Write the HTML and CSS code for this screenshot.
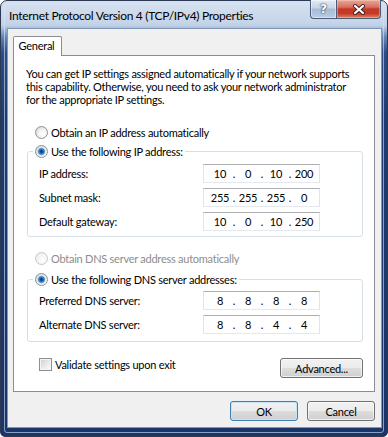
FILE: index.html
```html
<!DOCTYPE html>
<html lang="en">
<head>
    <meta charset="UTF-8">
    <title>Internet Protocol Version 4 (TCP/IPv4) Properties</title>
    <link rel="stylesheet" href="styles.css">
</head>
<body>

    <div class="window">
        <div class="frame">
            <!-- Title bar -->
            <div class="titlebar">
                <span class="title">Internet Protocol Version 4 (TCP/IPv4) Properties</span>
                <div class="caption-btns">
                    <span class="cap cap-help">?</span>
                    <span class="cap cap-close">
                        <svg width="14" height="11" viewBox="0 0 14 11">
                            <path d="M3 2 L11 9 M11 2 L3 9" stroke="#3a2320" stroke-width="4" stroke-linecap="round"/>
                            <path d="M3 2 L11 9 M11 2 L3 9" stroke="#ffffff" stroke-width="2.2" stroke-linecap="round"/>
                        </svg>
                    </span>
                </div>
            </div>

            <div class="client">
                <div class="tabs">
                    <span class="tab">General</span>
                </div>

                <div class="panel">
                    <p class="intro">
                        You can get IP settings assigned automatically if your network supports<br>
                        this capability. Otherwise, you need to ask your network administrator<br>
                        for the appropriate IP settings.
                    </p>

                    <div class="option first-option">
                        <span class="radio"></span>
                        <span>Obtain an IP address automatically</span>
                    </div>

                    <fieldset class="group ip-group">
                        <legend class="option">
                            <span class="radio checked"></span>
                            <span>Use the following IP address:</span>
                        </legend>
                        <div class="field-row">
                            <span class="field-label">IP address:</span>
                            <div class="ipbox">
                                <span class="oct">10</span><span class="dot">.</span><span class="oct">0</span><span class="dot">.</span><span class="oct">10</span><span class="dot">.</span><span class="oct">200</span>
                            </div>
                        </div>
                        <div class="field-row">
                            <span class="field-label">Subnet mask:</span>
                            <div class="ipbox">
                                <span class="oct">255</span><span class="dot">.</span><span class="oct">255</span><span class="dot">.</span><span class="oct">255</span><span class="dot">.</span><span class="oct">0</span>
                            </div>
                        </div>
                        <div class="field-row">
                            <span class="field-label">Default gateway:</span>
                            <div class="ipbox">
                                <span class="oct">10</span><span class="dot">.</span><span class="oct">0</span><span class="dot">.</span><span class="oct">10</span><span class="dot">.</span><span class="oct">250</span>
                            </div>
                        </div>
                    </fieldset>

                    <div class="option disabled dns-auto">
                        <span class="radio"></span>
                        <span>Obtain DNS server address automatically</span>
                    </div>

                    <fieldset class="group dns-group">
                        <legend class="option">
                            <span class="radio checked"></span>
                            <span>Use the following DNS server addresses:</span>
                        </legend>
                        <div class="field-row">
                            <span class="field-label">Preferred DNS server:</span>
                            <div class="ipbox">
                                <span class="oct">8</span><span class="dot">.</span><span class="oct">8</span><span class="dot">.</span><span class="oct">8</span><span class="dot">.</span><span class="oct">8</span>
                            </div>
                        </div>
                        <div class="field-row">
                            <span class="field-label">Alternate DNS server:</span>
                            <div class="ipbox">
                                <span class="oct">8</span><span class="dot">.</span><span class="oct">8</span><span class="dot">.</span><span class="oct">4</span><span class="dot">.</span><span class="oct">4</span>
                            </div>
                        </div>
                    </fieldset>

                    <div class="bottom-row">
                        <div class="option">
                            <span class="checkbox"></span>
                            <span>Validate settings upon exit</span>
                        </div>
                        <button class="btn btn-advanced">Advanced...</button>
                    </div>
                </div>

                <!-- Dialog buttons -->
                <div class="dialog-btns">
                    <button class="btn btn-default">OK</button>
                    <button class="btn">Cancel</button>
                </div>
            </div>
        </div>
    </div>

</body>
</html>
```

FILE: styles.css
```css
* {
    margin: 0;
    padding: 0;
    box-sizing: border-box;
}

body {
    font-family: 'Lato', 'Noto Sans', sans-serif;
    font-size: 11px;
    letter-spacing: -0.25px;
    color: #000;
    background: #fff;
}

/* Window chrome */
.window {
    width: 388px;
    height: 437px;
    border: 1px solid #2b3a52;
    border-radius: 7px 7px 5px 5px;
    padding: 3px;
    background: linear-gradient(to bottom, #d7e2f0 0px, #c3d3e7 24px, #6585b5 36px, #2a4b84 52px, #1d3b70 120px, #1a3567 100%);
}

.frame {
    height: 100%;
    border: 1px solid rgba(214, 228, 248, 0.6);
    border-radius: 5px 5px 3px 3px;
    padding: 0 2px 5px 3px;
    display: flex;
    flex-direction: column;
}

.titlebar {
    height: 24px;
    display: flex;
    align-items: flex-start;
}

.title {
    margin: 3px 0 0 1px;
    line-height: 15px;
    font-size: 12px;
    letter-spacing: -0.3px;
}

.caption-btns {
    margin-left: auto;
    margin-top: -5px;
    display: flex;
}

.cap {
    height: 19px;
    display: flex;
    align-items: center;
    justify-content: center;
    border: 1px solid #4a5b77;
    border-top: none;
}

.cap-help {
    width: 26px;
    border-radius: 0 0 0 4px;
    border-right: none;
    background: linear-gradient(to bottom, #e3ebf4 0%, #c6d4e5 45%, #a6bbd5 50%, #b9cde4 100%);
    box-shadow: inset 0 0 0 1px rgba(255, 255, 255, 0.45);
    color: #fff;
    font-family: 'DejaVu Sans', sans-serif;
    font-weight: bold;
    font-size: 12px;
    letter-spacing: 0;
    text-shadow: 0 0 2px #1f2c3f, 0 0 1px #1f2c3f;
}

.cap-close {
    width: 45px;
    border-radius: 0 0 4px 0;
    background: linear-gradient(to bottom, #e9a899 0%, #d7705d 40%, #c5362a 50%, #c53b26 75%, #e0835e 100%);
    box-shadow: inset 0 0 0 1px rgba(255, 220, 210, 0.4);
}

/* Client area */
.client {
    flex: 1;
    background: #f0f0f0;
    box-shadow: 0 0 0 1px #8197b8;
    padding: 7px 6px 6px 5px;
    display: flex;
    flex-direction: column;
}

.tabs {
    display: flex;
    margin-bottom: -1px;
    position: relative;
    z-index: 1;
}

.tab {
    height: 20px;
    width: 49px;
    border: 1px solid #898c95;
    border-bottom: none;
    border-radius: 2px 2px 0 0;
    background: #fff;
    text-align: center;
    line-height: 18px;
    padding-right: 2px;
}

.panel {
    height: 337px;
    border: 1px solid #898c95;
    background: #fff;
    padding: 0 11px 0 0;
}

.intro {
    margin: 11px 0 0 12px;
    line-height: 13px;
    white-space: nowrap;
}

/* Radios / checkboxes */
.option {
    display: flex;
    align-items: center;
    gap: 3px;
    height: 14px;
}

.first-option {
    margin: 19px 0 0 21px;
}

.dns-auto {
    margin: 14px 0 0 21px;
}

.option.disabled {
    color: #8d8d8d;
}

.radio {
    width: 13px;
    height: 13px;
    border-radius: 50%;
    border: 1px solid #8e8f8f;
    background: radial-gradient(circle at 65% 65%, #ffffff 0, #f4f4f4 40%, #d0d0d0 100%);
    flex: none;
}

.radio.checked {
    background:
        radial-gradient(circle at 50% 50%, #0d2f5c 0, #1f5a9c 1.5px, #4d95d6 3px, #9fd0f2 3.8px, transparent 4.3px),
        radial-gradient(circle at 65% 65%, #ffffff 0, #f4f4f4 40%, #d0d0d0 100%);
}

.disabled .radio {
    border-color: #c7c7c7;
    background: radial-gradient(circle at 65% 65%, #ffffff 0, #f7f7f7 40%, #e6e6e6 100%);
}

.checkbox {
    width: 13px;
    height: 13px;
    border: 1px solid #8e8f8f;
    background: linear-gradient(135deg, #cfcfcf 0%, #ececec 60%, #fbfbfb 100%);
    box-shadow: inset 0 0 0 1px #f4f4f4;
    flex: none;
}

/* Group boxes */
.group {
    border: 1px solid #d5dfe5;
    border-radius: 3px;
    margin: 0 0 0 13px;
    padding: 5px 0 5px 11px;
    min-width: 0;
}

.ip-group {
    margin-top: 4px;
}

.dns-group {
    margin-top: 6px;
    padding-top: 4px;
    padding-bottom: 7px;
}

.group legend {
    height: 16px;
    padding: 0 2px;
    margin-left: -6px;
}

.field-row {
    display: flex;
    align-items: center;
    height: 19px;
}

.field-row + .field-row {
    margin-top: 5px;
}

.field-label {
    width: 164px;
    flex: none;
}

.ipbox {
    width: 117px;
    height: 19px;
    display: flex;
    align-items: center;
    padding-left: 4px;
    background: #fff;
    border: 1px solid #e2e3ea;
    border-top-color: #abadb3;
    border-bottom-color: #e3e9ef;
}

.oct {
    width: 24px;
    text-align: center;
}

.dot {
    width: 4px;
    text-align: center;
}

/* Bottom row */
.bottom-row {
    display: flex;
    align-items: flex-start;
    justify-content: space-between;
    margin: 16px 0 0 25px;
}

.bottom-row .option {
    height: 13px;
}

/* Buttons */
.btn {
    font-family: inherit;
    font-size: 11px;
    letter-spacing: -0.25px;
    color: #000;
    height: 20px;
    border: 1px solid #707070;
    border-radius: 3px;
    background: linear-gradient(to bottom, #f2f2f2 0%, #ebebeb 50%, #dddddd 51%, #cfcfcf 100%);
    box-shadow: inset 0 0 0 1px rgba(255, 255, 255, 0.7);
}

.btn-advanced {
    width: 83px;
}

.dialog-btns {
    display: flex;
    justify-content: flex-end;
    gap: 9px;
    margin-top: 9px;
}

.dialog-btns .btn {
    width: 68px;
}

.btn-default {
    border-color: #3c7fb1;
    box-shadow: inset 0 0 0 1px #c4e5f6;
}
```
